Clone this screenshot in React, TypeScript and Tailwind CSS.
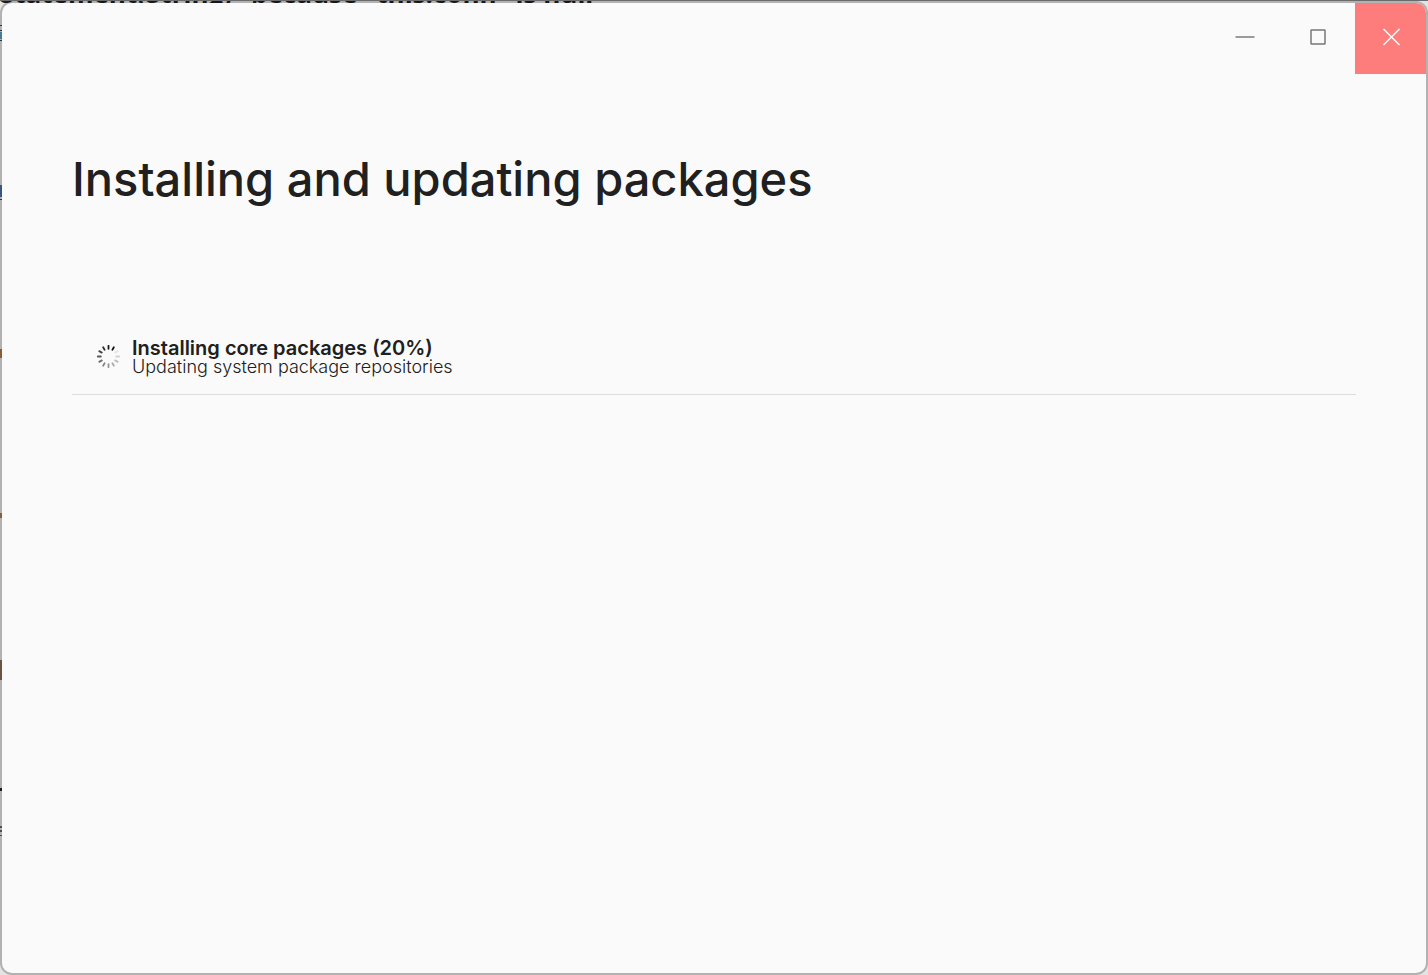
import React from "react"

// ── Install steps ─────────────────────────────────────────────

interface InstallStep {
  title: string
  detail: string
  percent: number
}

const STEPS: InstallStep[] = [
  {
    title: 'Installing core packages',
    detail: 'Updating system package repositories',
    percent: 20,
  },
]

// Twelve spokes, clockwise from the top
const SPOKES = [0.95, 1, 0.08, 0.16, 0.26, 0.34, 0.42, 0.5, 0.6, 0.7, 0.78, 0.88]

function Spinner() {
  return (
    <svg className="size-6 shrink-0" viewBox="0 0 24 24" role="img" aria-label="In progress">
      {SPOKES.map((opacity, i) => (
        <line
          key={i}
          x1="12.5"
          y1="0.8"
          x2="12.5"
          y2="3.8"
          stroke="#111111"
          strokeWidth="1.8"
          strokeLinecap="round"
          opacity={opacity}
          transform={`rotate(${i * 30} 12.5 11.5)`}
        />
      ))}
    </svg>
  )
}

// ── Title bar ─────────────────────────────────────────────────

function TitleBar() {
  return (
    <header className="flex h-[71px] shrink-0 justify-end">
      <button type="button" aria-label="Minimize" className="flex w-[73px] items-start justify-center pt-6 text-[#9a9a9a]">
        <svg className="size-5" viewBox="0 0 20 20" fill="none" stroke="currentColor" aria-hidden="true">
          <path d="M0.5 10H19.5" strokeWidth="2" />
        </svg>
      </button>
      <button type="button" aria-label="Maximize" className="flex w-[74px] items-start justify-center pt-6 text-[#777777]">
        <svg className="size-5" viewBox="0 0 20 20" fill="none" stroke="currentColor" aria-hidden="true">
          <rect x="3" y="3" width="14" height="14" rx="0.5" strokeWidth="1.5" />
        </svg>
      </button>
      <button type="button" aria-label="Close" className="flex w-[71px] items-start justify-center bg-[#fd7d7c] pt-6 text-white">
        <svg className="size-5" viewBox="0 0 20 20" fill="none" stroke="currentColor" aria-hidden="true">
          <path d="M2.5 2L18.5 18M18.5 2L2.5 18" strokeWidth="1.4" />
        </svg>
      </button>
    </header>
  )
}

// ── Page behind the window ────────────────────────────────────

function Backdrop() {
  return (
    <div className="absolute inset-0 overflow-hidden border-t border-[#6b6b6b]" aria-hidden="true">
      <p className="-mt-6 whitespace-nowrap font-['Open_Sans',sans-serif] text-[26px] leading-8 font-bold text-[#1d1d26]">
        Statement(String)&quot; because &quot;this.conn&quot; is null
      </p>
      <svg className="h-[900px] w-1" viewBox="0 0 4 900">
        <path d="M0 16.5H4M0 21.5H4M0 31.5H4M0 190.5H4" stroke="#444444" />
        <path d="M0 23H4V30H0Z" fill="#5b9fc4" />
        <path d="M0 176H4V188H0Z" fill="#4a6da8" />
        <path d="M0 340H4V349H0ZM0 504H4V509H0Z" fill="#b5793f" />
        <path d="M0 651H4V671H0Z" fill="#8f6a55" />
        <path d="M0 779H4V782H0Z" fill="#222222" />
        <path d="M0 817H4V819H0ZM0 821H4V823H0ZM0 826H4V827H0Z" fill="#666666" />
      </svg>
    </div>
  )
}

export default function App() {
  return (
    <div className="relative flex min-h-screen flex-col overflow-hidden bg-[#e4e4e4] pt-px font-['Inter','Liberation_Sans',sans-serif] text-[#202020]">
      <Backdrop />

      <div className="relative flex flex-1 flex-col overflow-hidden rounded-xl border-2 border-[#00000038] bg-[#fafafa] bg-clip-padding">
        <TitleBar />

        <main className="flex-1 px-[70px] pt-[74px]">
          <h1 className="text-[47px] leading-[62px] font-medium">Installing and updating packages</h1>

          <ul className="mt-[110px]">
            {STEPS.map((step) => (
              <li key={step.title} className="flex items-center gap-3 border-b border-[#dedede] px-6 py-[18px]">
                <Spinner />
                <div>
                  <p className="text-xl leading-5 font-semibold">
                    {step.title} ({step.percent}%)
                  </p>
                  <p className="text-lg leading-[18px] font-light">{step.detail}</p>
                </div>
              </li>
            ))}
          </ul>
        </main>
      </div>
    </div>
  )
}
